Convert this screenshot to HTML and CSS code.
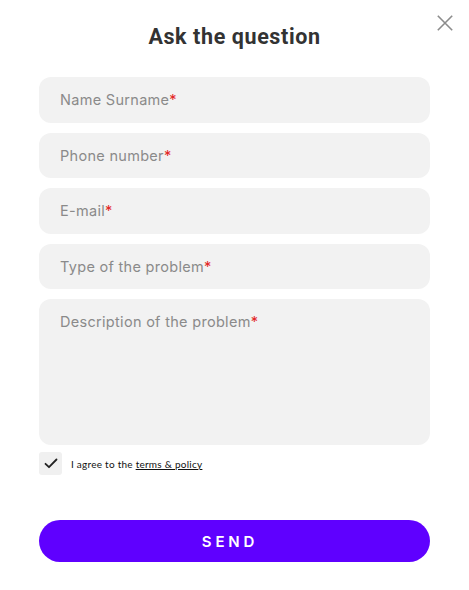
FILE: index.html
```html
<!DOCTYPE html>
<html>
<head>
<meta charset="utf-8">
<link rel="stylesheet" href="styles.css">
</head>
<body>
<div class="modal">
  <button class="close" aria-label="Close">
    <svg width="16" height="16" viewBox="0 0 16 16"><path d="M0.8 0.8 L15.2 15.2 M15.2 0.8 L0.8 15.2" stroke="#8c8c8c" stroke-width="1.6" fill="none"/></svg>
  </button>
  <h1 class="title">Ask the question</h1>
  <form class="form">
    <div class="field">Name Surname<span class="req">*</span></div>
    <div class="field">Phone number<span class="req">*</span></div>
    <div class="field">E-mail<span class="req">*</span></div>
    <div class="field">Type of the problem<span class="req">*</span></div>
    <div class="field area">Description of the problem<span class="req">*</span></div>
    <label class="agree">
      <span class="check">
        <svg width="14" height="11" viewBox="0 0 14 11"><path d="M1.5 5.8 L5 9.2 L12.5 1.5" stroke="#222" stroke-width="1.8" fill="none" stroke-linecap="round" stroke-linejoin="round"/></svg>
      </span>
      <span class="agree-text">I agree to the <u>terms &amp; policy</u></span>
    </label>
    <button type="button" class="send">SEND</button>
  </form>
</div>
</body>
</html>
```
FILE: styles.css
```css
* { box-sizing: border-box; }
html, body { margin: 0; padding: 0; background: #fff; }
.modal {
  position: relative;
  width: 469px;
  height: 590px;
  padding: 22px 39px 0 39px;
}
.close {
  position: absolute;
  top: 15px;
  left: 437px;
  width: 16px;
  height: 16px;
  padding: 0;
  border: 0;
  background: none;
}
.close svg { display: block; }
.title {
  margin: 0;
  text-align: center;
  font-family: Roboto, "Liberation Sans", sans-serif;
  font-weight: 700;
  font-size: 21.5px;
  line-height: 30px;
  color: #333;
  letter-spacing: 0.6px;
}
.form {
  margin-top: 25px;
  display: flex;
  flex-direction: column;
}
.field {
  height: 45.5px;
  margin-bottom: 10px;
  background: #f2f2f2;
  border-radius: 12px;
  padding: 0 21px;
  display: flex;
  align-items: center;
  font-family: Inter, "Noto Sans", sans-serif;
  font-size: 14.5px;
  color: #8a8a8a;
  letter-spacing: 0.3px;
}
.field.area {
  height: 146px;
  align-items: flex-start;
  padding-top: 14px;
  line-height: 18px;
}
.req { color: #e32626; }
.agree {
  margin-top: -3px;
  display: flex;
  align-items: center;
  gap: 9px;
}
.check {
  width: 23px;
  height: 23px;
  border-radius: 3px;
  background: #f0f0f0;
  display: flex;
  align-items: center;
  justify-content: center;
}
.agree-text {
  font-family: Lato, "Noto Sans", sans-serif;
  font-size: 10px;
  letter-spacing: 0.25px;
  color: #111;
}
.agree-text u { text-underline-offset: 1px; }
.send {
  margin-top: 45px;
  height: 42px;
  border: 0;
  border-radius: 21px;
  background: #5f00ff;
  color: #fff;
  font-family: Inter, "Noto Sans", sans-serif;
  font-weight: 600;
  font-size: 15px;
  letter-spacing: 3.8px;
  padding: 0 9px 0 0;
}
```
